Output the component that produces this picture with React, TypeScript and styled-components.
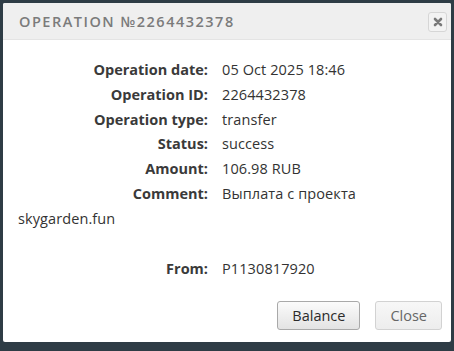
import React from 'react'
import styled, { createGlobalStyle } from 'styled-components'

const GlobalStyle = createGlobalStyle`
  html, body {
    margin: 0;
    padding: 0;
    background: #2e3c45;
  }
  body {
    font-family: "Open Sans", "Liberation Sans", sans-serif;
  }
`

const Backdrop = styled.div`
  width: 454px;
  height: 351px;
  padding: 3px 3px 0 3px;
  box-sizing: border-box;
`

const Modal = styled.div`
  width: 448px;
  height: 339px;
  background: #ffffff;
  border-radius: 2px;
  display: flex;
  flex-direction: column;
  overflow: hidden;
`

const Header = styled.div`
  height: 37px;
  background: #efefef;
  border-bottom: 1px solid #e4e4e4;
  display: flex;
  align-items: center;
  justify-content: space-between;
  padding: 1px 4px 0 16px;
  box-sizing: border-box;
`

const Title = styled.h2`
  margin: 0;
  font-family: "Open Sans", "Liberation Sans", sans-serif;
  font-size: 14.5px;
  font-weight: 600;
  letter-spacing: 1.5px;
  color: #7b7b7b;
`

const CloseX = styled.button`
  width: 19px;
  height: 20px;
  padding: 0;
  border: 1px solid #d6d6d6;
  border-radius: 3px;
  background: #f3f3f3;
  display: flex;
  align-items: center;
  justify-content: center;
  cursor: pointer;
`

const Body = styled.div`
  flex: 1;
  padding: 18px 15px 0 15px;
  font-size: 14.5px;
  line-height: 24.8px;
  color: #333333;
  letter-spacing: 0.1px;
`

const Row = styled.div<{ $gap?: boolean }>`
  margin-top: ${(p) => (p.$gap ? '25px' : '0')};
`

const Label = styled.span`
  display: inline-block;
  width: 190px;
  text-align: right;
  font-weight: 700;
  color: #3a3a3a;
  margin-right: 14px;
  letter-spacing: 0;
`

const Footer = styled.div`
  display: flex;
  justify-content: flex-end;
  gap: 15px;
  padding: 0 9px 12px 0;
`

const Button = styled.button<{ $primary?: boolean }>`
  height: 29px;
  padding: 0 14px;
  font-family: "Open Sans", "Liberation Sans", sans-serif;
  font-size: 14.5px;
  border-radius: 3px;
  cursor: pointer;
  color: ${(p) => (p.$primary ? '#2b2b2b' : '#666666')};
  border: 1px solid ${(p) => (p.$primary ? '#a9a9a9' : '#d2d2d2')};
  background: ${(p) =>
    p.$primary
      ? 'linear-gradient(#fbfbfb, #e3e3e3)'
      : 'linear-gradient(#f7f7f7, #ededed)'};
`

const rows = [
  ['Operation date:', '05 Oct 2025 18:46'],
  ['Operation ID:', '2264432378'],
  ['Operation type:', 'transfer'],
  ['Status:', 'success'],
  ['Amount:', '106.98 RUB'],
]

export default function App() {
  return (
    <>
      <GlobalStyle />
      <Backdrop>
        <Modal>
          <Header>
            <Title>OPERATION №2264432378</Title>
            <CloseX aria-label="close">
              <svg width="10" height="10" viewBox="0 0 10 10">
                <path d="M2 2 L8 8 M8 2 L2 8" stroke="#7a7a7a" strokeWidth="2.6" strokeLinecap="round" />
              </svg>
            </CloseX>
          </Header>
          <Body>
            {rows.map(([label, value]) => (
              <Row key={label}>
                <Label>{label}</Label>
                {value}
              </Row>
            ))}
            <Row>
              <Label>Comment:</Label>
              Выплата с проекта skygarden.fun
            </Row>
            <Row $gap>
              <Label>From:</Label>
              P1130817920
            </Row>
          </Body>
          <Footer>
            <Button $primary>Balance</Button>
            <Button>Close</Button>
          </Footer>
        </Modal>
      </Backdrop>
    </>
  )
}
